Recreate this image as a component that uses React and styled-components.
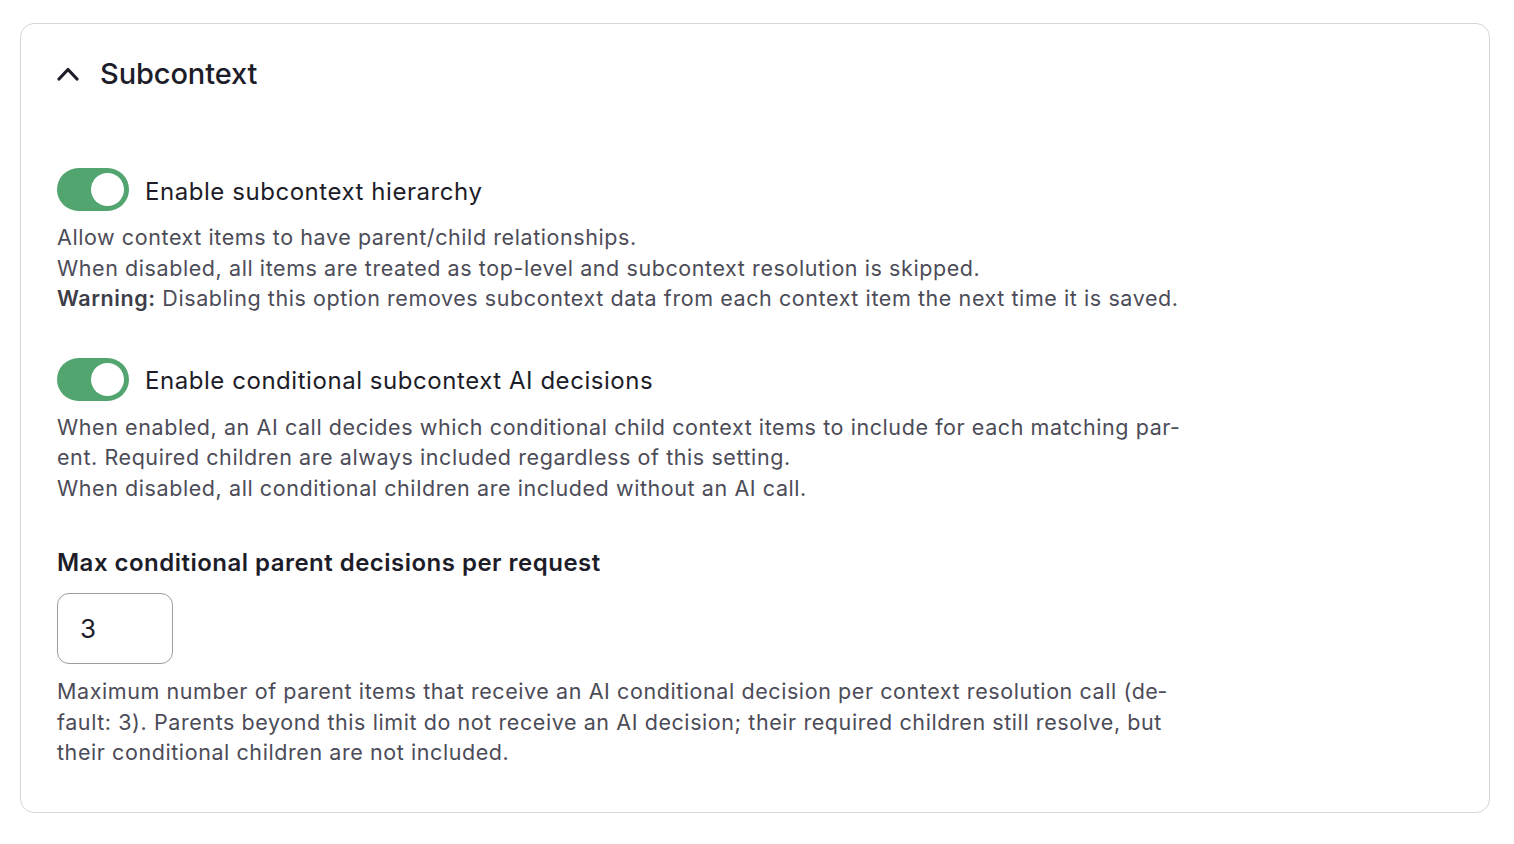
import styled, { createGlobalStyle } from 'styled-components';

const GlobalStyle = createGlobalStyle`
  html, body {
    margin: 0;
    background: #ffffff;
  }
  body {
    font-family: Inter, "Noto Sans", sans-serif;
    color: #1d1d29;
    -webkit-font-smoothing: antialiased;
  }
`;

const Page = styled.div`
  padding: 23px 24px 0 20px;
`;

const Card = styled.section`
  border: 1px solid #d6d6d9;
  border-radius: 14px;
  padding: 32px 36px 44px 36px;
`;

const Header = styled.button`
  display: flex;
  align-items: center;
  gap: 21px;
  padding: 0;
  border: 0;
  background: none;
  font: inherit;
  color: inherit;
  cursor: pointer;
`;

const Title = styled.h2`
  margin: 0;
  font-size: 29px;
  line-height: 35px;
  font-weight: 500;
  letter-spacing: -0.1px;
`;

const Body = styled.div`
  display: flex;
  flex-direction: column;
  padding-top: 77px;
`;

const Field = styled.div`
  display: flex;
  flex-direction: column;
  margin-bottom: ${(p) => p.$spacing || 0}px;
`;

const ToggleRow = styled.label`
  display: flex;
  align-items: center;
  gap: 16px;
  cursor: pointer;
`;

const Track = styled.span`
  display: inline-flex;
  align-items: center;
  justify-content: ${(p) => (p.$on ? 'flex-end' : 'flex-start')};
  box-sizing: border-box;
  width: 72px;
  height: 43px;
  padding: 0 5px;
  border-radius: 22px;
  background: ${(p) => (p.$on ? '#52a56f' : '#cfcfd4')};
`;

const Knob = styled.span`
  width: 33px;
  height: 33px;
  border-radius: 50%;
  background: #ffffff;
`;

const ToggleLabel = styled.span`
  font-size: 24px;
  line-height: 30px;
  font-weight: 400;
  letter-spacing: 0.55px;
  padding-top: 4px;
`;

const Help = styled.p`
  margin: ${(p) => p.$top || 11}px 0 0;
  max-width: 1130px;
  font-size: 21.5px;
  line-height: 30.5px;
  letter-spacing: 0.58px;
  color: #4c4c58;
  hyphens: manual;

  strong {
    font-weight: 600;
    color: #3d3d48;
  }
`;

const FieldLabel = styled.div`
  font-size: 24px;
  line-height: 30px;
  font-weight: 600;
  letter-spacing: 0.48px;
`;

const NumberInput = styled.input`
  box-sizing: border-box;
  width: 116px;
  height: 71px;
  margin-top: 15px;
  padding: 0 22px;
  border: 1px solid #9c9ca4;
  border-radius: 12px;
  font-family: inherit;
  font-size: 26px;
  color: #1d1d29;
  background: #ffffff;
  outline: none;
`;

function Chevron() {
  return (
    <svg width="22" height="15" viewBox="0 0 22 15" fill="none">
      <path d="M2 13 L11 3.5 L20 13" stroke="#1d1d29" strokeWidth="3.2" strokeLinecap="round" strokeLinejoin="round" />
    </svg>
  );
}

function Toggle({ on, label }) {
  return (
    <ToggleRow>
      <Track $on={on}>
        <Knob />
      </Track>
      <ToggleLabel>{label}</ToggleLabel>
    </ToggleRow>
  );
}

export default function App() {
  return (
    <Page>
      <GlobalStyle />
      <Card>
        <Header>
          <Chevron />
          <Title>Subcontext</Title>
        </Header>
        <Body>
          <Field $spacing={44}>
            <Toggle on label="Enable subcontext hierarchy" />
            <Help>
              Allow context items to have parent/child relationships.
              <br />
              When disabled, all items are treated as top-level and subcontext resolution is skipped.
              <br />
              <strong>Warning:</strong> Disabling this option removes subcontext data from each context item the next time it is saved.
            </Help>
          </Field>
          <Field $spacing={45}>
            <Toggle on label="Enable conditional subcontext AI decisions" />
            <Help>
              When enabled, an AI call decides which conditional child context items to include for each matching par&shy;ent. Required children are always included regardless of this setting.
              <br />
              When disabled, all conditional children are included without an AI call.
            </Help>
          </Field>
          <Field>
            <FieldLabel>Max conditional parent decisions per request</FieldLabel>
            <NumberInput type="number" defaultValue={3} />
            <Help $top={12}>
              Maximum number of parent items that receive an AI conditional decision per context resolution call (de&shy;fault: 3). Parents beyond this limit do not receive an AI decision; their required children still resolve, but their conditional children are not included.
            </Help>
          </Field>
        </Body>
      </Card>
    </Page>
  );
}
